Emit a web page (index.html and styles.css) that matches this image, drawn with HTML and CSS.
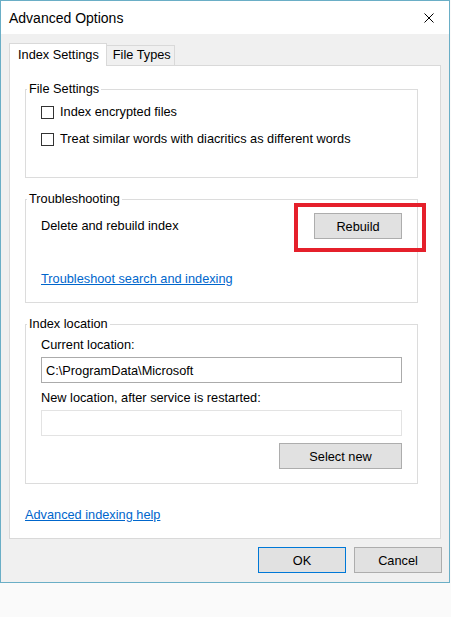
FILE: index.html
```html
<!DOCTYPE html>
<html lang="en">
<head>
<meta charset="utf-8">
<title>Advanced Options</title>
<link rel="stylesheet" href="styles.css">
</head>
<body>
<div class="window">
  <div class="titlebar">
    <span class="title">Advanced Options</span>
    <svg class="close" width="10" height="10" viewBox="0 0 10 10" aria-hidden="true">
      <path d="M0.5 0.5 L9.5 9.5 M9.5 0.5 L0.5 9.5" stroke="#000" stroke-width="1" fill="none"/>
    </svg>
  </div>
  <div class="client">
    <div class="tabs">
      <div class="tab tab-active">Index Settings</div>
      <div class="tab">File Types</div>
    </div>
    <div class="panel">
      <fieldset class="group group-files">
        <legend>File Settings</legend>
        <label class="check"><input type="checkbox"><span>Index encrypted files</span></label>
        <label class="check"><input type="checkbox"><span>Treat similar words with diacritics as different words</span></label>
      </fieldset>
      <fieldset class="group group-trouble">
        <legend>Troubleshooting</legend>
        <div class="rebuild-row">
          <span>Delete and rebuild index</span>
          <span class="mark-wrap">
            <button class="btn btn-rebuild">Rebuild</button>
            <span class="highlight"></span>
          </span>
        </div>
        <a class="link link-trouble" href="#">Troubleshoot search and indexing</a>
      </fieldset>
      <fieldset class="group group-location">
        <legend>Index location</legend>
        <div class="field-label">Current location:</div>
        <input class="textbox" type="text" value="C:\ProgramData\Microsoft" readonly>
        <div class="field-label field-label-2">New location, after service is restarted:</div>
        <input class="textbox textbox-disabled" type="text" value="" disabled>
        <div class="select-row"><button class="btn btn-select">Select new</button></div>
      </fieldset>
      <a class="link link-help" href="#">Advanced indexing help</a>
    </div>
    <div class="footer">
      <button class="btn btn-ok">OK</button>
      <button class="btn">Cancel</button>
    </div>
  </div>
</div>
</body>
</html>
```
FILE: styles.css
```css
html, body {
  margin: 0;
  padding: 0;
}
body {
  background: #fafafa;
  font-family: "Liberation Sans", Arial, sans-serif;
  font-size: 12.75px;
  line-height: 16px;
  color: #000;
}
.window {
  width: 450px;
  height: 583px;
  box-sizing: border-box;
  border: 1px solid #6aaec6;
  background: #f0f0f0;
  display: flex;
  flex-direction: column;
}
.titlebar {
  height: 33px;
  background: #fff;
  display: flex;
  align-items: center;
  justify-content: space-between;
  padding: 0 15px 0 8px;
}
.title {
  font-size: 14px;
  line-height: 18px;
  margin-top: 1px;
}
.close {
  display: block;
}
.client {
  flex: 1;
  display: flex;
  flex-direction: column;
  padding: 9px 8px 0 8px;
}
.tabs {
  display: flex;
  align-items: flex-end;
}
.tab {
  box-sizing: border-box;
  height: 20px;
  line-height: 18px;
  padding: 0 3px 0 6px;
  border: 1px solid #d9d9d9;
  border-bottom: none;
  border-left: none;
  background: #f0f0f0;
}
.tab-active {
  position: relative;
  z-index: 1;
  height: 23px;
  margin-bottom: -1px;
  line-height: 22px;
  padding: 0 7px 0 8px;
  border-left: 1px solid #d9d9d9;
  background: #fff;
}
.panel {
  width: 432px;
  box-sizing: border-box;
  background: #fff;
  border: 1px solid #d9d9d9;
  padding: 16px 22px 15px 15px;
  display: flex;
  flex-direction: column;
}
.group {
  margin: 0;
  border: 1px solid #dcdcdc;
  padding: 0 15px;
  min-width: 0;
  display: flex;
  flex-direction: column;
}
.group legend {
  padding: 0 2px;
  margin-left: -14px;
  line-height: 14px;
}
.group-files {
  padding-top: 6px;
  padding-bottom: 28px;
  gap: 7px;
}
.group-trouble {
  margin-top: 14px;
  padding-top: 7px;
  padding-bottom: 15px;
}
.group-location {
  margin-top: 14px;
  padding-top: 6px;
  padding-bottom: 14px;
}
.check {
  display: flex;
  align-items: center;
  gap: 6px;
  height: 20px;
}
.check input {
  appearance: none;
  -webkit-appearance: none;
  margin: 0;
  width: 13px;
  height: 13px;
  box-sizing: border-box;
  border: 1px solid #333;
  background: #fff;
  flex: none;
}
.rebuild-row {
  display: flex;
  align-items: center;
  justify-content: space-between;
  height: 26px;
}
.mark-wrap {
  position: relative;
  display: block;
}
.highlight {
  position: absolute;
  top: -10px;
  left: -20px;
  right: -24px;
  bottom: -13px;
  border: 4px solid #e5202b;
  pointer-events: none;
}
.btn {
  display: block;
  box-sizing: border-box;
  width: 88px;
  height: 26px;
  margin: 0;
  padding: 0;
  border: 1px solid #adadad;
  background: #e1e1e1;
  font-family: inherit;
  font-size: inherit;
  color: #000;
}
.link {
  color: #0066cc;
  text-decoration: underline;
  align-self: flex-start;
}
.link-trouble {
  margin-top: 32px;
}
.link-help {
  margin-top: 23px;
}
.field-label-2 {
  margin-top: 7px;
}
.textbox {
  display: block;
  box-sizing: border-box;
  width: 100%;
  height: 26px;
  margin: 4px 0 0 0;
  padding: 0 4px;
  border: 1px solid #ababab;
  background: #fff;
  font-family: inherit;
  font-size: inherit;
  color: #000;
  outline: none;
}
.textbox-disabled {
  border-color: #e3e3e3;
}
.select-row {
  display: flex;
  justify-content: flex-end;
  margin-top: 7px;
}
.btn-select {
  width: 123px;
}
.footer {
  display: flex;
  justify-content: flex-end;
  gap: 8px;
  padding: 8px 0 0 0;
  margin-right: -1px;
}
.btn-ok {
  border-color: #0078d7;
}
```
